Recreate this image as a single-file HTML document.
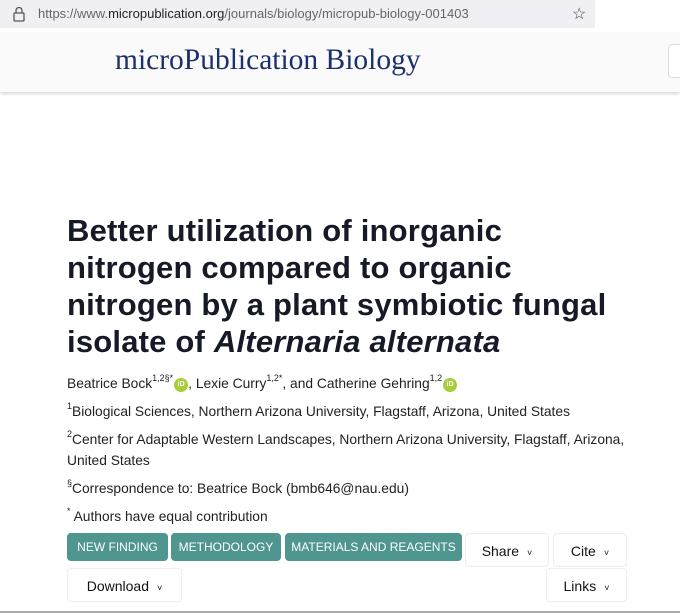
<!DOCTYPE html>
<html><head><meta charset="utf-8"><style>
*{margin:0;padding:0;box-sizing:border-box}
body{width:680px;height:616px;overflow:hidden;background:#fff;font-family:"Liberation Sans",sans-serif;position:relative;color:#222}
.bar{position:absolute;left:0;top:0;width:595px;height:28px;background:#f0f0f4}
.url{position:absolute;left:38px;top:6px;font-size:13px;color:#666}
.url b{color:#222;font-weight:normal}
.hdr{position:absolute;left:0;top:32px;width:680px;height:60px;background:#fafafa;box-shadow:0 2px 3px rgba(0,0,0,.15)}
.logo{position:absolute;left:115px;top:44px;font-family:"Liberation Serif",serif;font-size:29.5px;color:#1c2f6e}
.title{position:absolute;left:67px;top:212px;font-size:31px;font-weight:bold;line-height:37px;color:#161a26;white-space:nowrap;letter-spacing:0.2px}
.t{position:absolute;left:67px;font-size:13.8px;line-height:18px;color:#222;white-space:nowrap}
sup{font-size:9px;line-height:0;position:relative;top:-1px}
.orc{display:inline-block;width:14px;height:14px;border-radius:50%;background:#a6ce39;color:#fff;font-size:7px;text-align:center;line-height:14px;vertical-align:-1px;font-weight:bold;margin-left:1px;position:relative;top:-3px}
.tag{position:absolute;top:533px;height:28px;background:#4f9590;color:#fff;font-size:12px;border-radius:4px;text-align:center;line-height:28px;white-space:nowrap}
.btn{position:absolute;height:34px;background:#fff;border:1px solid #eee;border-radius:4px;font-size:14px;color:#111;line-height:34px;text-align:center}
.btn small{font-size:9px;margin-left:8px}
</style></head><body>
<div class="bar"></div>
<svg style="position:absolute;left:12px;top:6px" width="14" height="16" viewBox="0 0 14 16"><rect x="2" y="7" width="10" height="8" rx="1" fill="none" stroke="#555" stroke-width="1.3"/><path d="M4 7V4.5a3 3 0 0 1 6 0V7" fill="none" stroke="#555" stroke-width="1.3"/></svg>
<div class="url">https://www.<b>micropublication.org</b>/journals/biology/micropub-biology-001403</div>
<div style="position:absolute;left:572px;top:4px;font-size:16px;color:#444">☆</div>
<div class="hdr"></div>
<div style="position:absolute;left:668px;top:44px;width:20px;height:34px;border:1px solid #ddd;border-radius:4px;background:#fff"></div>
<div class="logo">microPublication Biology</div>
<div class="title">Better utilization of inorganic<br>nitrogen compared to organic<br>nitrogen by a plant symbiotic fungal<br>isolate of <i>Alternaria alternata</i></div>
<div class="t" style="top:375px">Beatrice Bock<sup>1,2§*</sup><span class="orc">iD</span>, Lexie Curry<sup>1,2*</sup>, and Catherine Gehring<sup>1,2</sup><span class="orc">iD</span></div>
<div class="t" style="top:403px"><sup>1</sup>Biological Sciences, Northern Arizona University, Flagstaff, Arizona, United States</div>
<div class="t" style="top:431px"><sup>2</sup>Center for Adaptable Western Landscapes, Northern Arizona University, Flagstaff, Arizona,</div>
<div class="t" style="top:452px">United States</div>
<div class="t" style="top:480px"><sup>§</sup>Correspondence to: Beatrice Bock (bmb646@nau.edu)</div>
<div class="t" style="top:508px"><sup>*</sup> Authors have equal contribution</div>
<div class="tag" style="left:67px;width:101px">NEW FINDING</div>
<div class="tag" style="left:171px;width:110px">METHODOLOGY</div>
<div class="tag" style="left:285px;width:177px">MATERIALS AND REAGENTS</div>
<div class="btn" style="left:465px;top:533px;width:84px">Share<small>˅</small></div>
<div class="btn" style="left:553px;top:533px;width:74px">Cite<small>˅</small></div>
<div class="btn" style="left:67px;top:568px;width:115px">Download<small>˅</small></div>
<div class="btn" style="left:546px;top:568px;width:81px">Links<small>˅</small></div>
<div style="position:absolute;left:0;top:611px;width:680px;height:2px;background:#aaa"></div>
</body></html>
